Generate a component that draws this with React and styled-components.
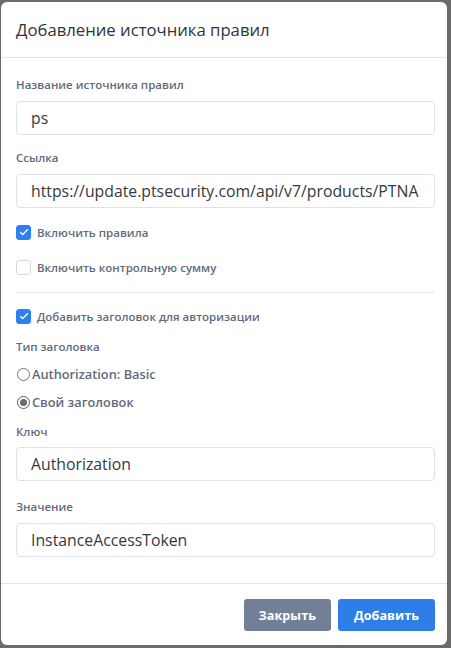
import React from "react"
import styled, { createGlobalStyle } from "styled-components"

const GlobalStyle = createGlobalStyle`
  html, body {
    margin: 0;
    padding: 0;
    background: #6b6b6b;
  }
  * {
    box-sizing: border-box;
  }
`

const Page = styled.div`
  width: 451px;
  height: 648px;
  padding: 2px 4px 3px 1px;
`

const Modal = styled.div`
  background: #fff;
  border-radius: 6px;
  height: 100%;
  display: flex;
  flex-direction: column;
`

const Header = styled.div`
  height: 56px;
  display: flex;
  align-items: center;
  padding: 0 15px;
  border-bottom: 1px solid #dee5ee;
`

const Title = styled.h5`
  margin: 0;
  font-family: "Open Sans", sans-serif;
  font-size: 16.7px;
  font-weight: 400;
  color: #2f353b;
`

const Body = styled.div`
  flex: 1;
  padding: 19px 12px 0 15px;
`

const Field = styled.div`
  display: flex;
  flex-direction: column;
  margin-bottom: ${p => (p.mb === undefined ? 15 : p.mb)}px;
`

const Label = styled.label`
  font-family: "Open Sans", sans-serif;
  font-size: 11.5px;
  font-weight: 600;
  color: #5f6b7b;
  line-height: 16px;
  margin-bottom: ${p => p.mb || 8}px;
`

const Input = styled.input`
  height: 34px;
  width: 100%;
  border: 1px solid #dbe3ee;
  border-radius: 4px;
  padding: 0 15px 0 14px;
  font-family: "Open Sans", sans-serif;
  font-size: 15.8px;
  color: #343a40;
  background: #fff;
  outline: none;
`

const CheckRow = styled.div`
  display: flex;
  align-items: center;
  gap: 6px;
  height: 16px;
  margin-bottom: ${p => p.mb || 19}px;
`

const Box = styled.span`
  width: 15px;
  height: 15px;
  border-radius: 3px;
  flex-shrink: 0;
  display: flex;
  align-items: center;
  justify-content: center;
  background: ${p => (p.checked ? "#2d80ef" : "#fff")};
  border: 1px solid ${p => (p.checked ? "#2d80ef" : "#d3d9e1")};
`

const CheckText = styled.span`
  font-family: "Open Sans", sans-serif;
  font-size: 11.5px;
  font-weight: 600;
  color: #5f6b7b;
`

const Divider = styled.hr`
  border: 0;
  border-top: 1px solid #e2e6eb;
  margin: 0 0 15px;
`

const RadioRow = styled.div`
  display: flex;
  align-items: center;
  gap: 2px;
  height: 16px;
  margin-bottom: ${p => p.mb || 12}px;
`

const Radio = styled.span`
  width: 13px;
  height: 13px;
  border-radius: 50%;
  border: 1px solid ${p => (p.checked ? "#5e5e5e" : "#767676")};
  background: #fff;
  flex-shrink: 0;
  display: flex;
  align-items: center;
  justify-content: center;
  margin-left: 1px;
  &::after {
    content: "";
    display: ${p => (p.checked ? "block" : "none")};
    width: 7px;
    height: 7px;
    border-radius: 50%;
    background: #6c6c6c;
  }
`

const RadioText = styled.span`
  font-family: "Open Sans", sans-serif;
  font-size: 12.8px;
  font-weight: 600;
  color: #5f6b7b;
`

const Footer = styled.div`
  border-top: 1px solid #dee5ee;
  height: 62px;
  display: flex;
  align-items: center;
  justify-content: flex-end;
  gap: 7px;
  padding: 0 12px 0 0;
`

const Button = styled.button`
  height: 32px;
  padding: 0 ${p => (p.primary ? 16 : 15)}px;
  border: 0;
  border-radius: 3px;
  font-family: "Open Sans", sans-serif;
  font-size: 12.7px;
  font-weight: 700;
  color: #fff;
  background: ${p => (p.primary ? "#2d7fe7" : "#718096")};
`

const Check = () => (
  <svg width="10" height="8" viewBox="0 0 10 8" fill="none">
    <path d="M1.2 4.2 L3.8 6.6 L8.8 1.3" stroke="#fff" strokeWidth="1.4" />
  </svg>
)

export default function App() {
  return (
    <Page>
      <GlobalStyle />
      <Modal>
        <Header>
          <Title>Добавление источника правил</Title>
        </Header>
        <Body>
          <Field>
            <Label>Название источника правил</Label>
            <Input readOnly defaultValue="ps" />
          </Field>
          <Field mb={16}>
            <Label>Ссылка</Label>
            <Input
              readOnly
              defaultValue="https://update.ptsecurity.com/api/v7/products/PTNAD/rules"
            />
          </Field>
          <CheckRow>
            <Box checked>
              <Check />
            </Box>
            <CheckText>Включить правила</CheckText>
          </CheckRow>
          <CheckRow mb={17}>
            <Box />
            <CheckText>Включить контрольную сумму</CheckText>
          </CheckRow>
          <Divider />
          <CheckRow mb={15}>
            <Box checked>
              <Check />
            </Box>
            <CheckText>Добавить заголовок для авторизации</CheckText>
          </CheckRow>
          <Label as="div" mb={11}>
            Тип заголовка
          </Label>
          <RadioRow>
            <Radio />
            <RadioText>Authorization: Basic</RadioText>
          </RadioRow>
          <RadioRow mb={14}>
            <Radio checked />
            <RadioText>Свой заголовок</RadioText>
          </RadioRow>
          <Field mb={18}>
            <Label mb={7}>Ключ</Label>
            <Input readOnly defaultValue="Authorization" />
          </Field>
          <Field mb={0}>
            <Label>Значение</Label>
            <Input readOnly defaultValue="InstanceAccessToken" />
          </Field>
        </Body>
        <Footer>
          <Button>Закрыть</Button>
          <Button primary>Добавить</Button>
        </Footer>
      </Modal>
    </Page>
  )
}
